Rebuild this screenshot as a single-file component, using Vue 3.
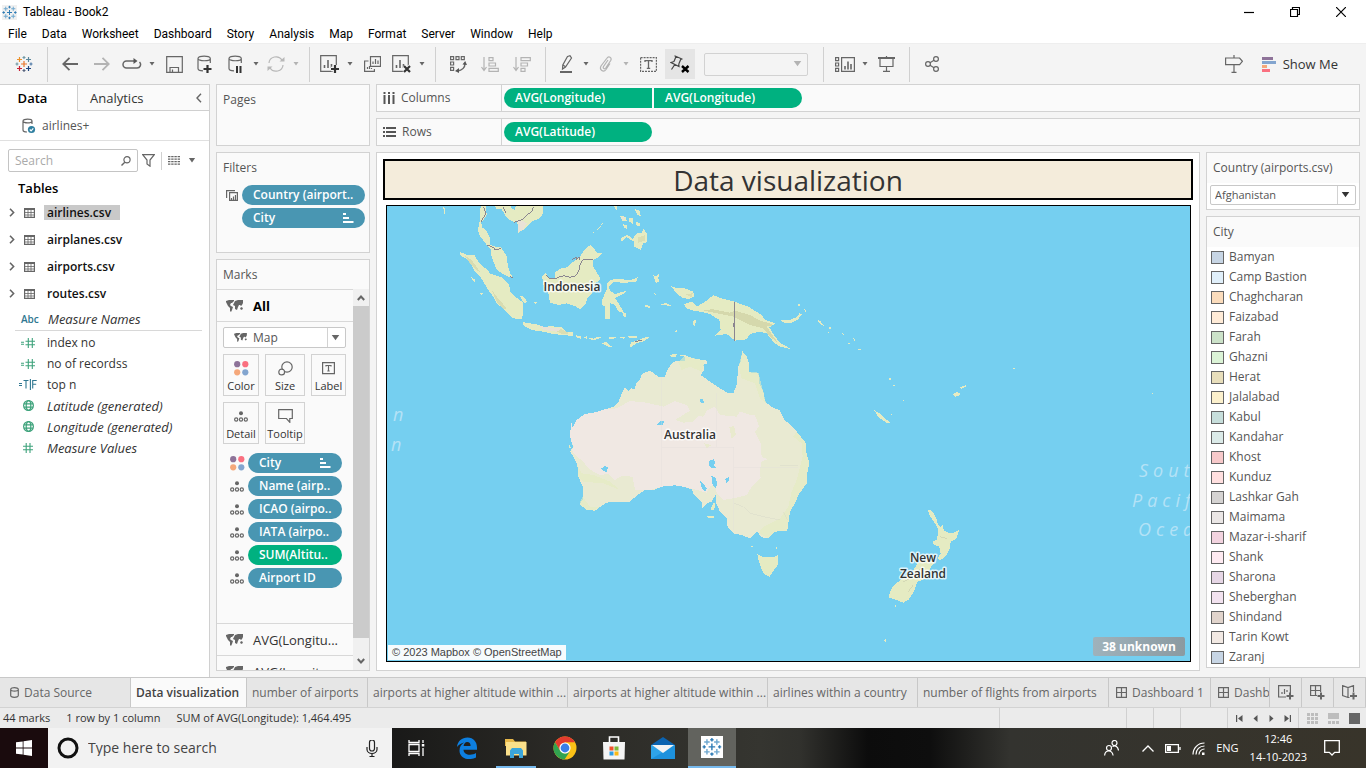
<script setup>
import { h } from 'vue'

const plus = (x, y, r) => `M${x - r} ${y}h${2 * r}M${x} ${y - r}v${2 * r}`
const cluster = (cs) => {
  const pts = [
    [9, 9, 3], [4.5, 4.5, 2.5], [13.5, 4.5, 2.5], [4.5, 13.5, 2.5], [13.5, 13.5, 2.5],
    [9, 2.5, 1.5], [9, 15.5, 1.5], [2, 9, 1.5], [16, 9, 1.5]
  ]
  return pts.map((p, i) => `<path stroke="${cs[i]}" d="${plus(p[0], p[1], p[2])}"/>`).join('')
}
const blues = ['#2f7cb5', '#6fa8cf', '#6fa8cf', '#6fa8cf', '#6fa8cf', '#2f7cb5', '#2f7cb5', '#2f7cb5', '#2f7cb5']
const grid9 = (f) => {
  let s = ''
  for (let r = 0; r < 3; r++) for (let c = 0; c < 3; c++) s += `<path fill="${f}" stroke="none" d="M${c * 4} ${r * 4}h3v3h-3z"/>`
  return s
}
const chart = '<path d="M.7 .7h15.6v15.6H.7z"/><path stroke-width="1.6" d="M4.5 13v-3M8 13V5M11.5 13V9"/>'
const world = '<path fill="#666" stroke="none" d="M0 1l3-1 4 0 1 1-2 2-1 0-1 2 1 1 2 1-1 3-1 2-1-1 0-3-2-2-2-4zM9 1l3-1 5 0 0 3-1 2-1 1-1-1-1 0-1 2-1 3-2-1 0-3-2-1 1-2zM14 8l2-1 1 2-2 1zM7 0l1 0 0 1-1 0z"/>'
const cyl = '<path d="M13.3 8V3.4M1 3.4v10c0 1.5 2.5 2.3 5 2.4M1 3.4C1 .3 13.3 .3 13.3 3.4S1 6.500 1 3.400z"/>'

const icons = {
  appBlue: [18, 18, cluster(blues)],
  logo: [18, 18, cluster(['#e8762b', '#eb912c', '#5b879b', '#c72035', '#1f457e', '#7099a6', '#59657f', '#7099a6', '#4e79a7'])],
  back: [16, 14, '<path stroke-width="1.8" d="M16 7H1M7.500 .8L1.200 7l6.300 6.200"/>'],
  fwd: [16, 14, '<path stroke-width="1.800" stroke="#b3b3b3" d="M0 7h15M8.500 .8L14.800 7l-6.300 6.200"/>'],
  cycle: [20, 12, '<path stroke-width="1.500" d="M14 3H4.500a3.500 3.500 0 000 7h10.500a3.500 3.500 0 002.500-6"/><path fill="#555" stroke="none" d="M11.500 0l4 3-4 3z"/>'],
  save: [17, 17, '<path d="M.7 .7h15.600v15.600H.7z"/><path d="M4 16v-4.500h8.500V16M6.500 13.500V16"/>'],
  dbAdd: [18, 18, cyl + '<path stroke="#333" stroke-width="2.200" d="M10.500 10v8M6.500 14h8"/>'],
  dbPause: [16, 18, cyl + '<path stroke="#333" stroke-width="2" d="M9 11v7M12.500 11v7"/>'],
  refresh: [18, 16, '<g stroke="#b8b8b8"><path d="M2 7a7 6.500 0 0113-3M16 9a7 6.500 0 01-13 3"/></g><path fill="#b8b8b8" stroke="none" d="M12.500 5.500h5V1zM5.500 10.500H.5V15z"/>'],
  chartAdd: [20, 18, chart + '<path stroke="#f4f4f4" stroke-width="4.500" d="M15 10v9M11 14h9"/><path stroke="#333" stroke-width="2.200" d="M15 10v8M11 14h8"/>'],
  chartDup: [17, 16, '<path d="M6.500 .6h10v9.800h-10zM4.500 5H.6v10.400h9.800V13"/><path d="M9 8V5.500M11.500 8V3M14 8V4.500M3.500 13v-2M5.500 13v-3M7.500 13v-1"/>'],
  chartClear: [20, 18, chart + '<path stroke="#f4f4f4" stroke-width="4.500" d="M12 10.500l7 7M19 10.500l-7 7"/><path stroke="#333" stroke-width="2.200" d="M12 11l6 6M18 11l-6 6"/>'],
  swap: [17, 17, '<path d="M.6 .6h3v3h-3zM6 .6h3v3H6zM11.300 .6h3v3h-3zM.6 6h3v3h-3zM.6 11.300h3v3h-3z"/><path stroke-width="1.500" d="M15 7.500c0 4-3 7-7.500 7.500"/><path fill="#555" stroke="none" d="M12.500 8.500L15.200 5 17 9zM9 12l-4 3 4 2z"/>'],
  sortAsc: [18, 15, '<g stroke="#b3b3b3"><path d="M3 0v13M.5 10L3 13.500 5.500 10M8 .6h4v3H8zM8 6h6.500v3H8zM8 11.300h9.300v3H8z"/></g>'],
  sortDesc: [18, 15, '<g stroke="#b3b3b3"><path d="M3 0v13M.5 10L3 13.500 5.500 10M8 .6h9.300v3H8zM8 6h6.500v3H8zM8 11.300h4v3H8z"/></g>'],
  pen: [13, 18, '<path d="M7.500 1.500L10 .7l1.500 2.300-6 9-3 2 .3-4z"/><path d="M3 10l2.500 1.800"/><path stroke-width="2" d="M0 17h12"/>'],
  clip: [14, 16, '<path stroke="#b3b3b3" d="M9 4L4.500 10.500c-1 2 1 3 2.200 1.500l5-7.500c1.500-3-2-5-4-2L2 10c-2 4 2.500 7 5 3.500l4-6"/>'],
  textBox: [17, 15, '<path stroke-dasharray="2 1" d="M.6 .6h15.800v13.800H.6z"/><path stroke-width="1.300" d="M5 5V3.700h7V5M8.500 3.700v7.500M6.800 11.300h3.400"/>'],
  pin: [20, 18, '<path stroke="#444" d="M4.500 .8l8 3.400M6 1.500L4 6.500M11 3.800L8.800 9M4 6.500L1 7.500l8 4-.2-2.500M4.800 9.500L1.500 14.500"/><path stroke="#000" stroke-width="2.400" d="M12 11l6.500 6M18.500 11L12 17"/>'],
  cards: [20, 15, '<path d="M.6 .6h3v3h-3zM.6 6h3v3h-3zM.6 11.300h3v3h-3zM6.600 .6h12.800v13.700H6.600z"/><path stroke-width="1.600" d="M10 12.500V9M13 12.500v-8M16 12.500V7"/>'],
  present: [17, 16, '<path stroke-width="2" d="M0 2h17"/><path d="M2 2v8.500h13V2M8.500 0v1M8.500 10.500v4.500M5 15.300h7"/>'],
  share: [15, 16, '<circle cx="3" cy="8" r="2.400"/><circle cx="11" cy="3" r="2.400"/><circle cx="11" cy="13" r="2.400"/><path d="M5 6.700l4-2.400M5 9.300l4 2.400"/>'],
  sign: [18, 18, '<path d="M.6 3h14l2.800 3.300-2.800 3.300H.6zM9 0v3M9 9.600v7.700M6.500 17.400h5"/>'],
  showMe: [14, 15, '<g stroke="none"><path fill="#8e7399" d="M0 0h11v3H0z"/><path fill="#83a5cf" d="M0 4h14v3H0z"/><path fill="#f5a87b" d="M0 8h5v3H0z"/><path fill="#fa7080" d="M0 12h8v3H0z"/></g>'],
  caret: [6, 4, '<path fill="#666" stroke="none" d="M.5 0h5L3 3.500z"/>'],
  caretOff: [6, 4, '<path fill="#b3b3b3" stroke="none" d="M.5 0h5L3 3.500z"/>'],
  chevL: [6, 10, '<path stroke-width="1.400" d="M5 .8L1 5l4 4.200"/>'],
  chevR: [6, 9, '<path stroke-width="1.600" d="M1 .8l3.600 3.700L1 8.200"/>'],
  up: [8, 6, '<path stroke-width="2" d="M.8 5L4 1.500 7.200 5"/>'],
  down: [8, 6, '<path stroke-width="2" d="M.8 1L4 4.500 7.200 1"/>'],
  source: [14, 16, '<path d="M10 6V3M1 3v9c0 1.300 2 2 4 2M1 3c0-2.500 9-2.500 9 0S1 5.500 1 3z"/><circle cx="9.500" cy="11.500" r="3.600" fill="#2f7fa0" stroke="none"/><path stroke="#fff" d="M7.800 11.500l1.300 1.300 2.200-2.500"/>'],
  find: [10, 10, '<circle cx="6" cy="3.800" r="3.100"/><path stroke-width="1.400" d="M3.800 6.200L.5 9.500"/>'],
  funnel: [13, 13, '<path d="M.7 .7h11.600L8 6v6.200L5 10V6z"/>'],
  list: [12, 9, '<path stroke-width="1.300" stroke-dasharray="2.400 .8" d="M0 .7h12M0 3.200h12M0 5.700h12M0 8.200h12"/>'],
  table: [11, 10, '<path d="M.6 .6h9.800v8.800H.6z"/><path stroke-width="1.600" d="M.6 1.200h9.800"/><path stroke-width=".8" d="M.6 4.500h9.800M.6 7h9.800M4 2v7M7 2v7"/>'],
  calcHash: [14, 10, '<g stroke="#3fa37c" stroke-width="1.100"><path d="M0 4.200h3M0 6.200h3M4.500 3.200h9.500M4.500 6.800h9.500M7.300 0v10M11.300 0v10"/></g>'],
  hash: [10, 10, '<g stroke="#3fa37c" stroke-width="1.100"><path d="M0 3.200h10M0 6.800h10M3.200 0v10M7 0v10"/></g>'],
  bool: [18, 11, '<g stroke="#2f7791" stroke-width="1.100"><path d="M0 4.500h3M0 6.500h3M4.500 1.500h5M7 1.500v8M11.400 0v11M13.700 9.500v-8h4M13.700 5.300h3.500"/></g>'],
  globe: [11, 11, '<g stroke="#3fa37c"><circle cx="5.500" cy="5.500" r="4.900"/><ellipse cx="5.500" cy="5.500" rx="2.300" ry="4.900"/><path d="M1 3.800h9M1 7.200h9"/></g>'],
  columns: [12, 12, '<path stroke="#555" stroke-width="2" stroke-dasharray="2 1 9" d="M1.500 0v12M6 0v12M10.500 0v12"/>'],
  rows: [13, 10, '<path stroke="#555" stroke-width="2" stroke-dasharray="2 1 10" d="M0 1h13M0 5h13M0 9h13"/>'],
  world: [17, 12, world],
  worldS: [17, 12, world],
  colors: [15, 15, '<g stroke="none"><circle cx="3.200" cy="3.200" r="3.100" fill="#8e7399"/><circle cx="11.300" cy="3.200" r="3.100" fill="#fa7080"/><circle cx="3.200" cy="11.300" r="3.100" fill="#f5a87b"/><circle cx="11.300" cy="11.300" r="3.100" fill="#83a5cf"/></g>'],
  detail: [14, 11, '<circle cx="7" cy="2.300" r="2" fill="#666" stroke="none"/><circle cx="2.200" cy="8.500" r="1.600"/><circle cx="7" cy="8.500" r="1.600"/><circle cx="11.800" cy="8.500" r="1.600"/>'],
  size: [15, 15, '<circle cx="9" cy="6" r="5.200"/><circle cx="3.700" cy="11" r="2.900" fill="#fafafa"/>'],
  label: [13, 13, '<path d="M.6 .6h11.800v11H.6z"/><path d="M4 4.500v-1h5v1M6.500 3.500v5.500M5.300 9h2.400"/>'],
  tooltip: [15, 14, '<path d="M.7 .7h13.600v8.800h-2.500v3.800L8.500 9.500H.7z"/>'],
  multi: [12, 11, '<path d="M3.600 2.600h7.800v7.800H3.600zM.6 8V.6H9"/><path d="M5.500 10V8M7.500 10V6.500M9.500 10V5"/>'],
  sorted: [11, 10, '<path stroke="#fff" stroke-width="1.800" d="M0 1h3M0 5h6M0 9h10.500"/>'],
  cylinder: [9, 11, '<path d="M.7 2.400v6.200c0 2.300 7.600 2.300 7.600 0V2.400M.7 2.400c0-2.300 7.600-2.300 7.600 0s-7.600 2.300-7.600 0z"/>'],
  dash: [11, 11, '<path d="M.6 .6h9.800v9.800H.6zM5.500 .6v9.800M.6 5.500h9.800"/>'],
  newSheet: [16, 15, '<path d="M8 12H.6V.6h11.800V8M4 9V7M6.500 9V4M9 7V5"/><path stroke-width="2" d="M12 7.500v7M8.500 11h7"/>'],
  newDash: [15, 15, '<path d="M7 10.500H.6V.6h10V7M5.500 .6v9.900M.6 5.500h10"/><path stroke-width="2" d="M11 7.500v7M7.500 11h7"/>'],
  newStory: [16, 15, '<path d="M7.500 12.500H6L.6 10.500V.6L6 2.500 11.500 .6V7M6 2.500v10"/><path stroke-width="2" d="M11.500 7.500v7M8 11h7"/>'],
  first: [7, 7, '<g fill="#555" stroke="none"><path d="M0 0h1.200v7H0zM6.500 0v7l-4.500-3.500z"/></g>'],
  prev: [7, 7, '<path fill="#555" stroke="none" d="M5.500 0v7L1.500 3.500z"/>'],
  next: [7, 7, '<path fill="#555" stroke="none" d="M1.500 0v7l4-3.500z"/>'],
  last: [7, 7, '<g fill="#555" stroke="none"><path d="M5.800 0H7v7H5.800zM.5 0v7L5 3.500z"/></g>'],
  grid: [11, 11, grid9('#bdbdbd')],
  strip: [11, 11, '<g fill="#bdbdbd" stroke="none"><path d="M0 0h11v6H0zM0 8h3v3H0zM4 8h3v3H4zM8 8h3v3H8z"/></g>'],
  single: [11, 11, '<path fill="#666" stroke="none" d="M0 0h11v11H0z"/>'],
  min: [10, 10, '<path stroke="#000" d="M0 5.500h10"/>'],
  restore: [10, 10, '<path stroke="#000" d="M.5 2.500h7v7h-7zM2.500 2.500v-2h7v7h-2"/>'],
  close: [10, 10, '<path stroke="#000" d="M0 0l10 10M10 0L0 10"/>'],
  win: [16, 16, '<path fill="#fff" stroke="none" d="M0 2.300L6.700 1.400v6.200H0zM7.500 1.300L16 0v7.600H7.500zM0 8.400h6.700v6.200L0 13.700zM7.500 8.400H16V16l-8.500-1.300z"/>'],
  cortana: [22, 22, '<circle cx="11" cy="11" r="9" stroke="#111" stroke-width="3"/>'],
  mic: [12, 17, '<path stroke="#222" d="M3.500 2.500a2.500 2.500 0 015 0v6a2.500 2.500 0 01-5 0zM1 7v2.500a5 4 0 0010 0V7M6 13.500v3M3.500 16.500h5"/>'],
  taskview: [17, 16, '<path stroke="#fff" stroke-width="1.300" d="M1 4.500h10v7H1zM1 0v2.500h10V0M1 16v-2.500h10V16M15 0v3M15 8v8"/><path fill="#fff" stroke="none" d="M13.800 4h2.500v2.500h-2.500z"/>'],
  edge: [20, 22, '<path fill="#0d7fe0" stroke="none" d="M0 10C.7 4 5 .5 10.500 .5 16.500 .5 20 5 20 10.500v2.300H6.500c.2 3.200 3 5 6.500 5 2.300 0 4.500-.7 6-1.700v4.300c-2 1.200-4.500 1.700-7.200 1.700C6.500 22.100 2.500 18.500 2.500 13.500c0-3.500 1.700-6.300 4.700-8C4 6.300 1.500 8 0 10zM6.600 9h7c0-2.500-1.200-4-3.400-4-2 0-3.300 1.700-3.600 4z"/>'],
  files: [22, 20, '<g stroke="none"><path fill="#e8b84a" d="M0 1h8l2 2.500h11V8H0z"/><path fill="#fbe08a" d="M1 4h20.500v13.500H1z"/><path fill="#3ba6dc" d="M5 20v-7.500l2-2.500h9l2 2.500V20h-4v-4H9v4z"/></g>'],
  chrome: [24, 24, '<g stroke="none"><circle cx="12" cy="12" r="11.500" fill="#fbc116"/><path fill="#e33b2e" d="M2 6.300A11.500 11.500 0 0122 6.300H12L7 14.500z"/><path fill="#31a350" d="M2 6.300L7.300 15 12 17.700 16.500 16l-5 7.500A11.500 11.500 0 012 6.300z"/><circle cx="12" cy="12" r="5.600" fill="#fff"/><circle cx="12" cy="12" r="4.400" fill="#3a7ee8"/></g>'],
  store: [22, 24, '<path stroke="#fff" stroke-width="1.600" d="M6.500 6V1h9v5"/><g stroke="none"><path fill="#f4f4f4" d="M0 6h22l-.5 17.500H.5z"/><path fill="#f0502b" d="M6.500 10.500h4v4h-4z"/><path fill="#7eb93a" d="M11.500 10.500h4v4h-4z"/><path fill="#2f9fe5" d="M6.500 15.500h4v4h-4z"/><path fill="#fbb916" d="M11.500 15.500h4v4h-4z"/></g>'],
  mail: [24, 22, '<g stroke="none"><path fill="#0b63b0" d="M0 8L12 0l12 8v3H0z"/><path fill="#2ea3e8" d="M0 8h24v14H0z"/><path fill="#1385d3" d="M0 22L24 8v14z" opacity=".6"/><path fill="#f3f3f3" d="M1 8h22L12 16z"/></g>'],
  tabTask: [22, 22, '<path fill="#fff" stroke="none" d="M0 0h22v22H0z"/><g transform="translate(1 1) scale(1.1)" stroke-width="1.300">' + cluster(blues) + '</g>'],
  people: [15, 16, '<g stroke="#fff"><circle cx="5" cy="8" r="2.500"/><path d="M.6 15.500c.5-6 7.500-6 8.500 0"/><circle cx="10.500" cy="3" r="2.500"/><path d="M8.500 6.500c3-1.500 5.500 0 6 4"/></g>'],
  trayUp: [12, 7, '<path stroke="#fff" stroke-width="1.300" d="M.5 6.500L6 1l5.500 5.500"/>'],
  battery: [16, 9, '<path stroke="#fff" stroke-width="1.300" d="M.6 .6h12.800v7.800H.6zM15 3v3"/><path fill="#fff" stroke="none" d="M2 2h4v5H2z"/>'],
  wifi: [13, 13, '<g stroke="#fff" stroke-width="1.200"><path d="M1 12.500C1 6 6 1 12.500 1M4 12.500c0-5 3.500-8.500 8.500-8.500M7 12.500C7 9.500 9.500 7 12.500 7"/></g><path fill="#fff" stroke="none" d="M10 10.500h2.500V13H10z"/>'],
  note: [16, 16, '<path stroke="#fff" stroke-width="1.300" d="M.7 .7h14.600v11.600h-4.600L8 15l-2.700-2.700H.7z"/>']
}
const scale = { worldS: 0.75 }

const Icon = (props) => {
  const [w, ht, body] = icons[props.name]
  const s = scale[props.name] || 1
  return h('svg', {
    width: Math.round(w * s), height: Math.round(ht * s), viewBox: `0 0 ${w} ${ht}`, fill: 'none', stroke: '#666',
    'stroke-width': 1.2, 'aria-hidden': 'true', innerHTML: body
  })
}
Icon.props = ['name']

const menus = ['File', 'Data', 'Worksheet', 'Dashboard', 'Story', 'Analysis', 'Map', 'Format', 'Server', 'Window', 'Help']
const tools1 = [
  'logo', '|', 'back', 'fwd', 'cycle:s', 'caret', 'save', 'dbAdd', 'dbPause:s', 'caret', 'refresh:s', 'caretOff', '|',
  'chartAdd:s', 'caret', 'chartDup', 'chartClear:s', 'caret', '|', 'swap', 'sortAsc', 'sortDesc', '|',
  'pen:s', 'caret', 'clip:s', 'caretOff', 'textBox'
].map((t) => t.split(':'))
const tools2 = ['|', 'cards:s', 'caret', 'present', '|', 'share'].map((t) => t.split(':'))

const tables = ['airlines.csv', 'airplanes.csv', 'airports.csv', 'routes.csv']
const fields = [
  ['calcHash', 'index no'], ['calcHash', 'no of recordss'], ['bool', 'top n'],
  ['globe', 'Latitude (generated)', 1], ['globe', 'Longitude (generated)', 1], ['hash', 'Measure Values', 1]
]
const cards = [['colors', 'Color'], ['size', 'Size'], ['label', 'Label'], ['detail', 'Detail'], ['tooltip', 'Tooltip']]
const marks = [
  ['colors', 'City'], ['detail', 'Name (airp..'], ['detail', 'ICAO (airpo..'], ['detail', 'IATA (airpo..'],
  ['detail', 'SUM(Altitu..', 1], ['detail', 'Airport ID']
]
const cities = [
  ['Bamyan', '#c7d5e4'], ['Camp Bastion', '#e0effa'], ['Chaghcharan', '#fbdcbc'], ['Faizabad', '#ffebd7'],
  ['Farah', '#cce2c9'], ['Ghazni', '#dbf3d6'], ['Herat', '#e8debb'], ['Jalalabad', '#fcf0cc'], ['Kabul', '#c7dedb'],
  ['Kandahar', '#dbeae8'], ['Khost', '#f7c9ca'], ['Kunduz', '#ffdfdf'], ['Lashkar Gah', '#d5d3d2'],
  ['Maimama', '#eae6e5'], ['Mazar-i-sharif', '#f2d3df'], ['Shank', '#feeaf1'], ['Sharona', '#e6d6e5'],
  ['Sheberghan', '#f2e2ef'], ['Shindand', '#e1d4cc'], ['Tarin Kowt', '#f2e9e3'], ['Zaranj', '#c7d5e4']
]
const apps = ['edge', 'files', 'chrome', 'store', 'mail', 'tabTask']
</script>

<template>
  <div class="app">
    <header class="titlebar">
      <Icon name="appBlue" class="appicon" /><span>Tableau - Book2</span>
      <div class="winbtns">
        <button aria-label="Minimize"><Icon name="min" /></button>
        <button aria-label="Restore"><Icon name="restore" /></button>
        <button aria-label="Close"><Icon name="close" /></button>
      </div>
    </header>
    <nav class="menubar"><button v-for="m in menus" :key="m">{{ m }}</button></nav>

    <div class="toolbar">
      <template v-for="(t, i) in tools1" :key="i">
        <i v-if="t[0] === '|'" class="sep"></i>
        <button v-else :class="['tool', t[0], { s: t[1] }]" :aria-label="t[0]"><Icon :name="t[0]" /></button>
      </template>
      <button class="tool pin" aria-label="Fix axes"><Icon name="pin" /></button>
      <div class="drop fit"><select aria-label="Fit" disabled><option></option></select><Icon name="caretOff" class="dcaret" /></div>
      <template v-for="(t, i) in tools2" :key="'b' + i">
        <i v-if="t[0] === '|'" class="sep"></i>
        <button v-else :class="['tool', t[0], { s: t[1] }]" :aria-label="t[0]"><Icon :name="t[0]" /></button>
      </template>
      <button class="tool guide" aria-label="Data guide"><Icon name="sign" /></button>
      <button class="showme"><Icon name="showMe" />Show Me</button>
    </div>

    <main class="work">
      <aside class="datapane">
        <div class="ptabs">
          <button class="on">Data</button>
          <button class="an">Analytics</button>
          <button class="fold" aria-label="Collapse"><Icon name="chevL" /></button>
        </div>
        <div class="source"><Icon name="source" />airlines+</div>
        <div class="searchrow">
          <label class="search"><input type="text" placeholder="Search" aria-label="Search fields" /><Icon name="find" /></label>
          <button aria-label="Filter"><Icon name="funnel" /></button>
          <button class="view" aria-label="View"><Icon name="list" /><Icon name="caret" class="big" /></button>
        </div>
        <h2>Tables</h2>
        <ul class="tables">
          <li v-for="(t, i) in tables" :key="t"><Icon name="chevR" /><Icon name="table" /><span :class="{ sel: !i }">{{ t }}</span></li>
        </ul>
        <div class="field names"><b class="abc">Abc</b><em>Measure Names</em></div>
        <ul class="fields">
          <li v-for="f in fields" :key="f[1]" class="field"><span class="fi"><Icon :name="f[0]" /></span><em v-if="f[2]">{{ f[1] }}</em><span v-else>{{ f[1] }}</span></li>
        </ul>
      </aside>

      <div class="shelfcol">
        <section class="panel pages"><h3>Pages</h3></section>
        <section class="panel filters">
          <h3>Filters</h3>
          <div class="frow"><span class="mi"><Icon name="multi" /></span><button class="pill">Country (airport..</button></div>
          <div class="frow"><span class="mi"></span><button class="pill">City<Icon name="sorted" /></button></div>
        </section>
        <section class="panel marks">
          <h3>Marks</h3>
          <div class="mbody">
            <div class="mlist">
              <button class="mhead all"><Icon name="world" />All</button>
              <div class="mcard">
                <div class="drop mtype"><Icon name="worldS" class="lead" /><select aria-label="Mark type"><option>Map</option></select><Icon name="caret" class="dcaret" /></div>
                <div class="mbtns">
                  <button v-for="c in cards" :key="c[1]"><span><Icon :name="c[0]" /></span>{{ c[1] }}</button>
                </div>
                <div v-for="m in marks" :key="m[1]" class="mrow">
                  <span class="mi"><Icon :name="m[0]" /></span>
                  <button :class="['pill', { green: m[2] }]">{{ m[1] }}<Icon v-if="m[0] === 'colors'" name="sorted" /></button>
                </div>
              </div>
              <button class="mhead"><Icon name="world" />AVG(Longitu...</button>
              <button class="mhead"><Icon name="world" />AVG(Longitu...</button>
            </div>
            <div class="scroll"><button aria-label="Scroll up"><Icon name="up" /></button><i></i><button aria-label="Scroll down" class="dn"><Icon name="down" /></button></div>
          </div>
        </section>
      </div>

      <div class="sheet">
        <div class="panel shelf"><span class="sl"><Icon name="columns" />Columns</span><button class="pill green l">AVG(Longitude)</button><button class="pill green r">AVG(Longitude)</button></div>
        <div class="panel shelf"><span class="sl"><Icon name="rows" />Rows</span><button class="pill green">AVG(Latitude)</button></div>
        <div class="content">
          <section class="panel viz">
            <h1>Data visualization</h1>
            <div class="map">
              <svg viewBox="387 206 803 455" preserveAspectRatio="xMidYMid slice" role="img" aria-label="Map of Oceania">
                <g fill="#e5ebc2" shape-rendering="crispEdges">
                  <g transform="translate(380 150) scale(.33333)">
                    <path d="M302 165L318 165 320 195 304 218 306 232 320 242 330 265 330 283 345 290 362 290 380 318 384 350 392 372 400 384 385 380 368 372 350 358 340 335 333 312 332 297 318 282 300 258 294 240 300 210Z" />
                    <path d="M342 165L490 165 490 190 478 205 455 215 443 228 430 240 415 248 412 218 400 215 385 208 375 195 365 178 350 178Z" />
                    <path fill="#75cff0" d="M390 165L408 165 404 180 394 174Z" />
                    <path d="M240 306L262 315 282 314 298 340 325 362 330 370 365 382 388 405 390 425 405 440 430 458 430 490 425 508 400 505 380 488 365 472 350 460 340 440 328 425 310 395 300 380 285 365 275 345 258 325 242 318Z" />
                    <path d="M428 516L450 520 475 524 495 532 510 528 545 532 560 546 580 547 580 558 560 556 520 552 490 545 455 540 430 526Z" />
                    <path d="M588 556L603 558 602 566 590 563ZM612 562L622 558 620 568ZM626 562L640 566 655 560 665 562 650 568 640 570 628 567ZM685 560L710 562 700 567 688 566ZM667 578L680 577 695 590 685 590ZM718 562L735 562 732 566ZM745 559L772 558 770 563 748 564ZM750 590L752 578 770 572 795 562 812 560 790 574 768 580 756 590Z" />
                    <path d="M487 380L497 370 508 385 525 385 526 365 545 355 562 352 580 335 600 320 615 298 632 284 645 300 652 310 668 310 650 325 640 330 640 350 652 370 662 388 645 400 640 410 635 430 622 445 615 465 600 477 585 468 560 460 535 465 510 458 505 430 492 410 488 395Z" />
                    <path d="M682 400L690 390 715 386 740 390 762 388 776 378 768 395 740 398 700 397 687 410 690 422 705 432 742 422 730 432 705 444 712 455 725 475 733 490 715 484 705 464 690 460 689 507 676 507 676 470 665 465 668 445 680 420Z" />
                    <path d="M722 276L724 264 742 255 758 266 770 250 785 250 790 236 800 250 801 276 790 280 782 300 762 290 762 275 740 262ZM720 197L736 200 740 212 728 215ZM728 222L742 226 740 238 732 232ZM745 203L760 205 758 222 748 215ZM765 178L780 182 782 198 772 195ZM768 215L780 220 778 230 768 225ZM698 165L712 165 710 180ZM637 250L655 235 674 211 660 234Z" />
                    <path d="M820 375L828 380 838 368 835 385 838 396 828 398 824 390ZM795 466L812 467 810 473 797 472ZM832 462L860 460 878 470 860 466ZM820 430L828 431 826 436ZM942 508L948 512 944 528 938 522ZM885 546L892 538 890 546ZM420 437L430 440 442 455 434 460 426 450ZM462 456L472 458 466 462ZM272 380L284 388 284 396 276 388ZM298 428L308 430 306 438ZM190 172L194 176 194 194 192 192ZM727 488L738 488 736 504 730 498Z" />
                    <path d="M872 408L888 414 912 414 940 425 942 440 925 448 905 442 890 430ZM912 462L935 455 950 470 975 455 1000 436 1025 445 1063 455 1105 470 1145 495 1155 510 1186 520 1168 532 1178 550 1200 578 1234 598 1195 588 1180 575 1160 550 1140 545 1110 552 1100 568 1065 572 1040 552 1006 557 1022 540 1018 510 990 492 960 485 940 482 918 474Z" />
                    <path d="M1200 510L1225 511 1250 502 1258 490 1266 492 1254 508 1235 518 1212 518ZM868 617L888 612 884 620Z" />
                    <g fill="#d5d8ac">
                      <path d="M965 480L1000 478 1050 488 1065 482 1110 495 1140 512 1170 520 1180 526 1160 530 1180 560 1196 580 1170 560 1150 535 1110 525 1060 500 1010 490Z" />
                      <path d="M255 318L275 330 300 365 290 362 270 340ZM335 420L350 440 380 475 372 478 350 455Z" opacity=".8" />
                      <path d="M520 540L545 538 570 550 545 552ZM775 262L795 255 796 272 775 278ZM915 432L938 430 936 442Z" opacity=".7" />
                    </g>
                    <path fill="#e9e2d6" d="M412 210L428 212 440 220 430 238 415 246ZM478 528L510 532 545 536 530 545 490 540ZM720 200L734 202 730 212Z" />
                    <g fill="none" stroke="#8a8590" stroke-width="3">
                      <path d="M1063 455V572M1060 520V530" />
                      <path d="M497 375L508 386 525 386 540 380 552 377 570 382 585 378 596 365 600 345 608 330 640 330M576 328L590 322 588 330 598 320 600 330" />
                      <path d="M320 285L340 292 345 300 362 296M310 170L318 190 303 215M368 170L378 190M402 218L415 212 430 208 440 195 455 185 460 170" />
                      <path d="M765 576L785 570M390 380L398 384" />
                    </g>
                  </g>
                  <g transform="translate(550 340) scale(.33333)">
                    <path fill="#e9ead2" d="M65 247L68 262 80 240 105 222 135 217 165 208 190 200 205 188 215 160 225 142 237 153 243 145 255 147 258 130 272 115 275 102 300 92 318 105 325 110 345 110 352 90 365 70 380 62 405 62 403 45 430 55 470 62 472 70 460 75 462 90 452 105 480 125 510 145 535 160 550 160 560 135 566 75 572 65 577 33 590 50 597 70 598 95 610 100 625 98 628 130 640 155 645 185 665 200 690 212 703 240 720 252 740 275 768 310 768 335 778 370 772 400 770 430 745 465 735 490 720 515 712 572 675 575 655 595 635 592 622 575 600 595 575 585 550 580 533 562 530 535 510 515 498 488 498 462 485 485 470 490 457 505 455 488 430 460 425 448 400 440 375 436 335 440 310 450 285 450 262 465 240 485 200 485 170 488 155 498 135 512 110 510 88 492 98 480 98 440 85 410 82 375 70 350 60 335 70 320 62 300 60 280Z" />
                    <path fill="#f0e8e3" d="M65 247L68 262 80 240 105 222 135 217 165 208 200 205 240 183 290 188 340 200 375 183 410 195 420 212 375 240 400 248 430 245 445 228 460 230 470 212 495 200 510 225 560 230 570 215 600 225 615 225 627 260 615 275 632 310 635 350 652 358 635 365 630 390 632 415 605 440 590 465 550 475 520 480 500 460 495 430 480 440 470 458 440 450 400 440 375 436 335 440 300 450 255 450 248 410 215 408 195 420 175 402 150 405 130 395 110 380 100 365 75 345 65 330 72 320 62 300 60 280Z" />
                    <path fill="#e4ebbf" d="M403 48L465 62 455 95 420 80 395 90 385 68ZM577 33L590 50 597 75 598 95 625 98 640 155 648 190 630 175 615 130 575 115 566 80ZM740 275L768 310 768 335 778 370 772 400 770 430 745 465 735 490 720 515 712 572 675 575 655 595 625 580 640 560 690 535 715 500 725 455 740 420 758 350 755 310 730 290ZM98 470L120 500 150 500 135 512 110 510 88 492ZM82 375L95 400 130 405 180 425 210 450 160 430 100 425 85 410ZM538 262L552 258 558 285 545 295ZM462 310L485 315 470 325Z" opacity=".6" />
                    <g><path d="M622 642L640 652 668 652 684 645 683 675 668 695 658 711 640 700 632 680 625 660ZM472 528H492V534H474ZM360 44L380 42 378 50 362 50ZM386 44L402 46 396 50ZM482 508L490 488 496 490 492 512ZM604 618H609V622H604ZM678 620H682V628H678ZM155 10L168 8 186 20 170 18ZM55 322L60 312 62 325Z" /></g>
                    <path fill="#75cff0" d="M320 256L332 242 342 244 338 254ZM450 176L460 178 461 188 452 188ZM152 386L165 378 174 382 170 396 158 392ZM478 362L492 358 496 368 492 374 498 384 484 384 476 374ZM450 422L462 432 470 446 466 454 456 446ZM484 408L496 412 502 432 496 444 488 436ZM526 418L536 410 536 424 530 430Z" />
                    <path fill="none" stroke="#e2dfda" stroke-width="2" d="M336 110V438M336 322H552V570M499 160V322M552 382H745" opacity=".5" />
                    <path fill="none" stroke="#d4d7c8" stroke-width="2" d="M552 490L580 500 600 520 640 530 690 540M700 515L712 540M690 378L745 375" opacity=".6" />
                  </g>
                  <g transform="translate(780 280) scale(.33333)">
                    <path d="M110 118L122 124 131 137 122 134ZM147 141H153V146H147ZM144 156H148V160H144ZM182 156L194 164 188 164ZM219 172L228 184 222 184ZM201 187L216 193 205 192ZM233 205L243 209 235 209ZM54 71H59V77H54ZM73 88L78 92 75 100ZM327 294H333V300H327ZM338 312L345 317 340 318ZM282 390L298 400 330 428 320 428 296 412ZM518 344L530 336 540 340 538 348 526 350ZM540 322L558 316 556 321 545 326ZM699 263H705V267H699ZM1115 339H1119V342H1115ZM368 360H372V363H368ZM333 402H336V405H333ZM313 1080L318 1076 317 1085 311 1084ZM344 974L351 978 345 984Z" />
                    <path d="M444 690L455 692 468 712 472 728 480 742 488 735 492 752 510 760 522 758 537 750 530 775 512 785 508 810 498 828 480 842 474 835 482 820 478 800 458 792 458 785 472 778 474 745 468 735 448 705Z" />
                    <path d="M325 952L335 925 355 905 375 890 395 880 412 850 430 838 465 845 450 865 440 895 412 905 402 935 385 960 370 968 350 960Z" />
                    <path fill="none" stroke="#d4d8b5" stroke-width="3" d="M370 905L400 890 425 860M480 770L500 775M385 935L400 915" />
                  </g>
                </g>
                <g class="ocean">
                  <text x="1139" y="477">Sout</text><text x="1132" y="507">Pacif</text><text x="1138" y="536">Ocea</text>
                  <text x="393" y="421">n</text><text x="391" y="451">n</text>
                </g>
                <g class="place">
                  <text x="572" y="291">Indonesia</text><text x="690" y="439">Australia</text><text x="923" y="562">New</text><text x="923" y="578">Zealand</text>
                </g>
              </svg>
              <div class="credit">© 2023 Mapbox © OpenStreetMap</div>
              <button class="unknown">38 unknown</button>
            </div>
          </section>
          <div class="rightcol">
            <section class="panel country">
              <h3><label for="country">Country (airports.csv)</label></h3>
              <div class="drop"><select id="country"><option>Afghanistan</option></select><Icon name="caret" class="dcaret dark" /></div>
            </section>
            <section class="panel city">
              <h3>City</h3>
              <ul><li v-for="c in cities" :key="c[0]"><i :style="{ background: c[1] }"></i>{{ c[0] }}</li></ul>
            </section>
          </div>
        </div>
      </div>
    </main>

    <nav class="tabs">
      <button class="ds"><Icon name="cylinder" />Data Source</button>
      <button class="cur">Data visualization</button>
      <button class="t1">number of airports</button>
      <button class="t2">airports at higher altitude within ...</button>
      <button class="t2">airports at higher altitude within ...</button>
      <button class="t3">airlines within a country</button>
      <button class="t4">number of flights from airports</button>
      <button class="t5"><Icon name="dash" />Dashboard 1</button>
      <button class="t6"><Icon name="dash" />Dashb</button>
      <button class="new" aria-label="New worksheet"><Icon name="newSheet" /></button>
      <button class="new" aria-label="New dashboard"><Icon name="newDash" /></button>
      <button class="new" aria-label="New story"><Icon name="newStory" /></button>
    </nav>
    <div class="status">
      <span>44 marks</span><span>1 row by 1 column</span><span>SUM of AVG(Longitude): 1,464.495</span>
      <i class="c1"></i><i class="c2"></i><i class="c2"></i><i class="c3"></i>
      <div class="nav"><button v-for="n in ['first', 'prev', 'next', 'last']" :key="n" :aria-label="n"><Icon :name="n" /></button></div>
      <div class="nav modes"><button v-for="n in ['grid', 'strip', 'single']" :key="n" :aria-label="n"><Icon :name="n" /></button></div>
    </div>

    <footer class="taskbar">
      <button class="start" aria-label="Start"><Icon name="win" /></button>
      <label class="tsearch"><Icon name="cortana" /><input type="text" placeholder="Type here to search" aria-label="Type here to search" /><Icon name="mic" /></label>
      <button class="tv" aria-label="Task view"><Icon name="taskview" /></button>
      <button v-for="a in apps" :key="a" :class="['app-b', a]" :aria-label="a"><Icon :name="a" /></button>
      <div class="tray">
        <Icon name="people" class="ppl" /><Icon name="trayUp" /><Icon name="battery" /><Icon name="wifi" /><span class="eng">ENG</span>
        <div class="clock"><span>12:46</span><span>14-10-2023</span></div>
        <Icon name="note" />
      </div>
    </footer>
  </div>
</template>

<style>
body { margin: 0; overflow: hidden; }
</style>

<style scoped>
.app { min-height: 100vh; display: flex; flex-direction: column; background: #f4f4f4; color: #333; font: 12px/16px "Open Sans", "Noto Sans", sans-serif; }
.app * { box-sizing: border-box; }
button { border: 0; background: none; padding: 0; margin: 0; font: inherit; color: inherit; display: flex; align-items: center; justify-content: center; white-space: nowrap; }
ul, h1, h2, h3 { margin: 0; padding: 0; list-style: none; font-weight: 400; font-size: 12px; }
svg { flex: none; display: block; }
input, select { font: inherit; color: inherit; border: 0; background: none; outline: 0; padding: 0; margin: 0; min-width: 0; appearance: none; }

.titlebar { height: 24px; background: #fff; display: flex; align-items: center; font: 12px/16px Roboto, sans-serif; color: #000; gap: 6px; padding-left: 2px; }
.appicon { width: 15px; height: 15px; background: #f0f0f0; }
.winbtns { margin: 0 2px 0 auto; display: flex; height: 20px; }
.winbtns button { width: 46px; }
.menubar { height: 19px; background: #fff; display: flex; font: 12px/16px Roboto, sans-serif; color: #000; }
.menubar button { padding: 0 7px 0 8px; }

.toolbar { height: 41px; border-top: 1px solid #eee; display: flex; align-items: center; }
.sep { width: 1px; height: 35px; background: #d0d0d0; margin: 0 6px 0 7px; flex: none; }
.tool { width: 32px; height: 30px; flex: none; }
.tool.logo { margin-left: 8px; }
.tool.s { width: 28px; }
.tool.caret, .tool.caretOff { width: 12px; }
.tool.pin { width: 30px; background: #e5e5e5; margin-left: 1px; }
.drop { position: relative; display: flex; align-items: center; border: 1px solid #c8c8c8; border-radius: 2px; background: #fff; }
.drop select { flex: 1; height: 100%; }
.dcaret { position: absolute; right: 5px; width: 9px; height: 6px; pointer-events: none; }
.fit { width: 104px; height: 23px; margin: 0 8px 0 9px; background: #f4f4f4; border-color: #d2d2d2; }
.tool.guide { margin-left: auto; }
.tool.cards { width: 30px; }
.tool.cards + .caret { width: 10px; }
.showme { gap: 7px; font-size: 13px; margin: 0 28px 0 12px; }

.work { flex: 1; display: flex; min-height: 0; }
.datapane { width: 210px; flex: none; background: #fff; border-right: 1px solid #d0d0d0; }
.ptabs { display: flex; height: 27px; border-top: 1px solid #d0d0d0; font-size: 13px; }
.ptabs .on { width: 77px; font-weight: 600; color: #000; padding-right: 12px; }
.ptabs .an { flex: 1; justify-content: flex-start; padding-left: 12px; border-left: 1px solid #d0d0d0; border-bottom: 1px solid #d0d0d0; background: #fafafa; }
.ptabs .fold { width: 20px; border-bottom: 1px solid #d0d0d0; background: #fafafa; }
.source { height: 30px; display: flex; align-items: center; gap: 6px; padding-left: 22px; border-bottom: 1px solid #e0e0e0; color: #555; }
.searchrow { display: flex; align-items: center; margin: 8px 0 0 8px; height: 23px; gap: 4px; }
.search { width: 130px; height: 23px; border: 1px solid #c4c4c4; border-radius: 2px; display: flex; align-items: center; padding: 0 6px; }
.search input { flex: 1; }
.search input::placeholder { color: #aaa; opacity: 1; }
.view { gap: 8px; border-left: 1px solid #d0d0d0; height: 18px; padding-left: 6px; margin-left: 2px; }
.big { width: 8px; height: 5px; }
.datapane h2 { font-weight: 600; font-size: 13px; color: #000; padding-left: 18px; margin: 7px 0 2px; line-height: 18px; }
.tables li { height: 27px; display: flex; align-items: center; padding-left: 9px; color: #111; font-weight: 600; }
.tables li svg + svg { margin: 0 9px; }
.tables span { line-height: 15px; padding: 0 9px 0 3px; }
.tables .sel { background: #c9c9c9; }
.field { height: 21px; display: flex; align-items: center; }
.field em { font-size: 13px; }
.names { height: 24px; margin: 0 7px 0 15px; border-bottom: 1px solid #d8d8d8; }
.abc { width: 33px; padding-left: 6px; font-size: 10px; font-weight: 600; color: #2f7791; }
.fields { padding-top: 1px; }
.fi { width: 47px; display: flex; justify-content: center; padding-left: 9px; }

.shelfcol { width: 154px; flex: none; margin-left: 6px; display: flex; flex-direction: column; gap: 6px; padding-bottom: 6px; }
.panel { border: 1px solid #d2d2d2; background: #fafafa; }
.panel h3 { padding: 7px 6px; line-height: 16px; color: #555; }
.pages { height: 62px; }
.filters { height: 101px; }
.frow, .mrow { display: flex; align-items: center; height: 20px; margin-bottom: 3px; padding-right: 4px; }
.panel.filters h3 { padding-bottom: 9px; }
.mi { width: 25px; padding-left: 5px; display: flex; justify-content: center; flex: none; }
.pill { height: 20px; flex: 1; border-radius: 10px; background: #4996b2; color: #fff; font-weight: 600; padding: 0 11px; justify-content: space-between; }
.green { background: #00b180; }
.marks { flex: 1; display: flex; flex-direction: column; min-height: 0; }
.panel.marks h3 { padding-bottom: 6px; }
.mbody { flex: 1 1 0; min-height: 0; display: flex; }
.mlist { flex: 1; overflow: hidden; }
.mhead { width: 100%; height: 32px; flex: none; border-top: 1px solid #d8d8d8; justify-content: flex-start; gap: 10px; padding-left: 9px; font-size: 13px; }
.mhead.all { border-bottom: 1px solid #d8d8d8; height: 33px; font-weight: 700; color: #000; }
.mcard { padding: 5px 6px 0; height: 301px; }
.mtype { height: 21px; width: 123px; margin-bottom: 6px; }
.mtype .lead { margin: 0 6px 0 10px; }
.mtype select, .country select { color: #555; }
.mtype::after, .country .drop::after { content: ""; position: absolute; right: 17px; top: 0; bottom: 0; width: 1px; background: #d2d2d2; }
.mbtns { display: grid; grid-template-columns: 36px 40px 35px; gap: 6px; margin-bottom: 9px; }
.mbtns button { height: 42px; flex-direction: column; border: 1px solid #d2d2d2; font-size: 11px; line-height: 14px; }
.mbtns span { height: 22px; display: flex; align-items: center; }
.mrow { padding-right: 5px; }
.mrow .mi { padding-left: 3px; }
.scroll { width: 16px; background: #f0f0f0; display: flex; flex-direction: column; flex: none; }
.scroll button { height: 17px; }
.scroll i { flex: 1; background: #cbcbcb; }
.scroll .dn { height: 32px; align-items: flex-end; padding-bottom: 6px; }

.sheet { flex: 1; min-width: 0; margin: 0 6px; display: flex; flex-direction: column; gap: 6px; }
.shelf { height: 28px; display: flex; align-items: center; }
.sl { width: 125px; height: 100%; display: flex; align-items: center; gap: 6px; padding-left: 6px; border-right: 1px solid #d2d2d2; margin-right: 2px; color: #555; }
.shelf .pill { flex: none; width: 148px; }
.shelf .l { border-radius: 10px 0 0 10px; }
.shelf .r { border-radius: 0 10px 10px 0; margin-left: 2px; }
.content { flex: 1; display: flex; gap: 6px; min-height: 0; padding-bottom: 6px; }
.viz { flex: 1; min-width: 0; background: #fff; padding: 6px; display: flex; flex-direction: column; }
.viz h1 { height: 41px; flex: none; border: 2px solid #000; background: #f4ecdb; font-size: 28px; line-height: 39px; text-align: center; color: #333; }
.map { flex: 1; margin: 5px 2px 2px 3px; border: 1px solid #000; background: #75cff0; position: relative; min-height: 0; display: flex; }
.map > svg { width: 100%; height: 100%; position: absolute; }
.place text { font: 600 12px "Open Sans", sans-serif; fill: #333; stroke: #fff; stroke-width: 3px; stroke-opacity: 0.75; paint-order: stroke; stroke-linejoin: round; text-anchor: middle; }
.ocean text { font: italic 18px "Open Sans", sans-serif; fill: #b4e2f6; letter-spacing: 5px; }
.credit { position: absolute; left: 1px; bottom: 1px; background: #f6fbfd; color: #444; font: 11px/15px "Liberation Sans", Arial, sans-serif; padding: 0 4px; }
.unknown { position: absolute; right: 5px; bottom: 5px; height: 19px; width: 92px; border-radius: 2px; background: linear-gradient(90deg, #9fb2bb, #8b9aa1); color: #fff; font-weight: 700; }
.rightcol { width: 154px; flex: none; display: flex; flex-direction: column; gap: 6px; padding-bottom: 3px; }
.country { height: 58px; background: #fff; }
.country h3, .city h3 { background: #fafafa; }
.country .drop { height: 20px; margin: 2px 3px 0; font-size: 11px; padding-left: 4px; }
.dark { filter: brightness(0.5); }
.city { flex: 1; background: #fff; }
.city li { height: 20px; display: flex; align-items: center; gap: 5px; padding-left: 4px; color: #555; }
.city i { width: 13px; height: 13px; border: 1px solid #666; }

.tabs { height: 31px; flex: none; display: flex; background: #e6e6e6; border-top: 1px solid #c8c8c8; border-bottom: 1px solid #d2d2d2; color: #666; }
.tabs button { border-right: 1px solid #c8c8c8; padding-left: 5px; gap: 5px; justify-content: flex-start; overflow: hidden; flex: none; }
.tabs .ds { width: 131px; padding-left: 10px; }
.tabs .cur { width: 116px; background: #fafafa; font-weight: 600; color: #444; }
.tabs .t1 { width: 121px; }
.tabs .t2 { width: 200px; }
.tabs .t3 { width: 150px; }
.tabs .t4 { width: 191px; }
.tabs .t5 { width: 102px; padding-left: 7px; }
.tabs .t6 { flex: 1; padding-left: 7px; min-width: 0; }
.tabs .new { width: 32px; padding: 0; justify-content: center; }
.status { height: 20px; flex: none; display: flex; align-items: center; background: #ebebeb; font-size: 11px; padding-left: 3px; color: #333; }
.status > span { margin-right: 16px; }
.status i { border-left: 1px solid #d0d0d0; height: 100%; }
.status .c1 { width: 127px; margin-left: auto; }
.c2 { width: 27px; }
.c3 { width: 47px; }
.nav { display: flex; border-left: 1px solid #d0d0d0; height: 100%; align-items: center; width: 71px; gap: 9px; padding-left: 8px; }
.modes { width: 68px; gap: 10px; }

.taskbar { height: 40px; flex: none; display: flex; color: #fff; background: linear-gradient(90deg, #1a0b0d 0, #1a0b0d 48px, #191918 392px, #2b2a26 560px, #353530 760px, #31312d 800px, #0c0c0c 868px, #0e0e0e 930px, #33332f 1010px, #38342a 100%); }
.start { width: 48px; }
.tsearch { width: 344px; background: #f2f2f2; display: flex; align-items: center; padding: 0 14px 0 9px; gap: 9px; }
.tsearch input { flex: 1; font-size: 14px; }
.tsearch input::placeholder { color: #444; opacity: 1; }
.tv { width: 48px; margin-right: 2px; }
.app-b { width: 48px; margin-left: 1px; }
.files { border-bottom: 2px solid #76b9ed; padding-top: 2px; width: 40px; margin: 0 4px 0 5px; }
.tabTask { background: #62635e; border-bottom: 2px solid #76b9ed; }
.tray { margin-left: auto; display: flex; align-items: center; gap: 11px; padding-right: 26px; font-size: 11px; }
.ppl { margin-right: 12px; }
.clock { display: flex; flex-direction: column; align-items: center; line-height: 18px; margin-right: 6px; }
</style>
